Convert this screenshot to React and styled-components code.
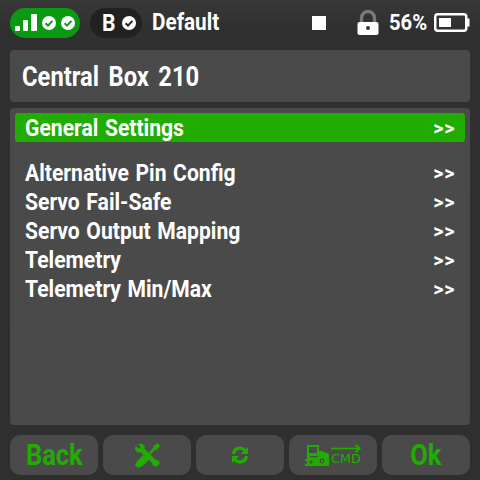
import styled, { createGlobalStyle } from 'styled-components';

const GREEN = '#20ac00';

const menuItems = ['Alternative Pin Config', 'Servo Fail-Safe', 'Servo Output Mapping', 'Telemetry', 'Telemetry Min/Max'];

const GlobalStyle = createGlobalStyle`
    html, body {
        margin: 0;
        padding: 0;
        background: #2f2f2f;
    }
    * {
        box-sizing: border-box;
    }
`;

const CheckDot = ({ size = 14, fill = '#fff', tick = '#0a9a12' }) => (
    <svg width={size} height={size} viewBox="0 0 14 14">
        <circle cx="7" cy="7" r="7" fill={fill} />
        <path d="M3.6 7.2 L6 9.6 L10.4 4.9" fill="none" stroke={tick} strokeWidth="2" />
    </svg>
);

const SignalBars = () => (
    <svg width="22" height="18" viewBox="0 0 22 18">
        <rect x="0" y="12" width="5" height="5" rx="1" fill="#fff" />
        <rect x="8" y="6" width="5" height="11" rx="1" fill="#fff" />
        <rect x="16" y="0" width="6" height="17" rx="1" fill="#fff" />
    </svg>
);

const LockIcon = () => (
    <svg width="22" height="25" viewBox="0 0 22 25">
        <path d="M4.5 12 V8 a6.5 6.5 0 0 1 13 0 V12" fill="none" stroke="#7a7a7a" strokeWidth="3.4" />
        <rect x="0.5" y="12" width="21" height="13" rx="2" fill="#fff" />
        <circle cx="11" cy="18" r="2" fill="#333" />
    </svg>
);

const BatteryIcon = () => (
    <svg width="36" height="20" viewBox="0 0 36 20">
        <rect x="1.25" y="1.25" width="31" height="16.5" rx="2.5" fill="none" stroke="#fff" strokeWidth="2.5" />
        <rect x="33" y="5.5" width="2.5" height="8" fill="#fff" />
        <rect x="5" y="5" width="12" height="9" fill="#fff" />
    </svg>
);

const ToolsIcon = () => (
    <svg width="25" height="25" viewBox="0 0 26 26">
        <path d="M3 1 L8 1 L10 3 L10 6 L22 18 L24 18 L26 21 L22 25 L18 23 L18 21 L6 10 L3 10 L0 7 L0.5 3 L4 6 L6 4 Z" fill={GREEN} />
        <path d="M24 0 L26 3 L23 7 L21 7 L16 12 L18 14 L8 24 L3 26 L0 23 L2 19 L12 9 L14 11 L19 5 L19 3 Z" fill={GREEN} />
    </svg>
);

const RefreshIcon = () => (
    <svg width="18" height="18" viewBox="0 0 18 18">
        <path d="M2.5 8 A6.5 6.5 0 0 1 14 4.5" fill="none" stroke={GREEN} strokeWidth="3.2" />
        <path d="M17 1 V8 H10 Z" fill={GREEN} />
        <path d="M15.5 10 A6.5 6.5 0 0 1 4 13.5" fill="none" stroke={GREEN} strokeWidth="3.2" />
        <path d="M1 17 V10 H8 Z" fill={GREEN} />
    </svg>
);

const ReceiverIcon = () => (
    <svg width="25" height="21" viewBox="0 0 25 21">
        <path d="M2 0 H14 V6 H17 L24 9 V21 H0 V19 H2 V16 H0 V14 H2 Z" fill={GREEN} />
        <rect x="4" y="2" width="8" height="6" fill="#4a4a4a" />
        <rect x="5" y="11" width="8" height="1.2" fill="#4a4a4a" />
        <circle cx="6" cy="17" r="1.6" fill="#4a4a4a" />
        <circle cx="17" cy="16" r="2.4" fill="#4a4a4a" />
        <circle cx="17" cy="16" r="1.2" fill={GREEN} />
    </svg>
);

const ArrowIcon = () => (
    <svg width="30" height="9" viewBox="0 0 30 9">
        <path d="M0 4.5 H28" stroke={GREEN} strokeWidth="1.6" />
        <path d="M24.5 0.8 L28.5 4.5 L24.5 8.2" fill="none" stroke={GREEN} strokeWidth="2" />
    </svg>
);

const App = () => {
    return (
        <Screen>
            <GlobalStyle />
            <StatusBar>
                <RadioPill>
                    <SignalBars />
                    <CheckDot />
                    <CheckDot />
                </RadioPill>
                <ModelPill>
                    <span>B</span>
                    <CheckDot fill="#fff" tick="#222" />
                </ModelPill>
                <ProfileName>Default</ProfileName>
                <StopSquare />
                <LockBox>
                    <LockIcon />
                </LockBox>
                <BatteryText>56%</BatteryText>
                <BatteryIcon />
            </StatusBar>
            <TitlePanel>
                <Wide>Central Box 210</Wide>
            </TitlePanel>
            <ListPanel>
                <MenuRow $active>
                    <Wide>General Settings</Wide>
                    <Chevrons>&gt;&gt;</Chevrons>
                </MenuRow>
                <RowGap />
                {menuItems.map((item) => (
                    <MenuRow key={item}>
                        <Wide>{item}</Wide>
                        <Chevrons>&gt;&gt;</Chevrons>
                    </MenuRow>
                ))}
            </ListPanel>
            <Footer>
                <FooterButton>
                    <FooterLabel>Back</FooterLabel>
                </FooterButton>
                <FooterButton>
                    <ToolsIcon />
                </FooterButton>
                <FooterButton>
                    <RefreshIcon />
                </FooterButton>
                <FooterButton>
                    <ReceiverIcon />
                    <CmdBox>
                        <ArrowIcon />
                        <CmdText>CMD</CmdText>
                    </CmdBox>
                </FooterButton>
                <FooterButton>
                    <FooterLabel>Ok</FooterLabel>
                </FooterButton>
            </Footer>
        </Screen>
    );
};

export default App;

const Screen = styled.div`
    width: 480px;
    height: 480px;
    overflow: hidden;
    display: flex;
    flex-direction: column;
    background: linear-gradient(#383838 0, #303030 28px, #2f2f2f 100%);
    font-family: Roboto, 'Liberation Sans', sans-serif;
    font-weight: 700;
    color: #fff;
`;

const StatusBar = styled.div`
    height: 50px;
    padding: 5px 10px 10px;
    display: flex;
    align-items: center;
    svg {
        flex-shrink: 0;
    }
`;

const RadioPill = styled.div`
    width: 70px;
    height: 30px;
    border-radius: 15px;
    background: #0a9a12;
    display: flex;
    align-items: center;
    padding-left: 5px;
    gap: 5px;
`;

const ModelPill = styled.div`
    width: 52px;
    height: 30px;
    margin-left: 10px;
    border-radius: 15px;
    background: #212121;
    display: flex;
    align-items: center;
    justify-content: space-between;
    padding: 0 6px 0 12px;
    font-size: 24px;
    span {
        display: inline-block;
        transform: scaleX(0.88);
        transform-origin: left center;
    }
`;

const ProfileName = styled.div`
    margin-left: 10px;
    font-size: 23px;
    width: 100px;
    transform: scaleX(0.9);
    transform-origin: left center;
`;

const StopSquare = styled.div`
    width: 14px;
    height: 14px;
    margin-left: 61px;
    background: #fff;
`;

const LockBox = styled.div`
    margin-left: 31px;
    display: flex;
`;

const BatteryText = styled.div`
    margin-left: 10px;
    font-size: 22px;
    width: 45px;
    transform: scaleX(0.92);
    transform-origin: left center;
`;

const TitlePanel = styled.div`
    height: 52px;
    margin: 0 10px;
    padding: 2px 0 0 12px;
    display: flex;
    align-items: center;
    background: #4a4a4a;
    border-radius: 4px;
    font-size: 27px;
    word-spacing: 4px;
`;

const ListPanel = styled.div`
    height: 317px;
    margin: 6px 10px 0;
    padding: 5px;
    background: #4a4a4a;
    border-radius: 4px;
    font-size: 24px;
    word-spacing: 1.5px;
`;

const MenuRow = styled.div`
    height: 29px;
    padding: 1px 10px 0;
    display: flex;
    align-items: center;
    justify-content: space-between;
    border-radius: 3px;
    background: ${({ $active }) => ($active ? GREEN : 'transparent')};
`;

const RowGap = styled.div`
    height: 16px;
`;

const Wide = styled.span`
    display: inline-block;
    transform: scaleX(0.88);
    transform-origin: left center;
    white-space: nowrap;
`;

const Chevrons = styled.span`
    font-size: 20px;
    letter-spacing: 0.5px;
`;

const Footer = styled.div`
    margin: 10px 10px 0;
    display: grid;
    grid-template-columns: repeat(5, 88px);
    column-gap: 5px;
`;

const FooterButton = styled.div`
    height: 40px;
    background: #4a4a4a;
    border-radius: 10px;
    display: flex;
    align-items: center;
    justify-content: center;
`;

const FooterLabel = styled.span`
    color: ${GREEN};
    font-size: 29px;
    transform: scaleX(0.88);
`;

const CmdBox = styled.div`
    display: flex;
    flex-direction: column;
    align-items: flex-start;
    margin-top: -2px;
    margin-left: 1px;
`;

const CmdText = styled.span`
    color: ${GREEN};
    font-size: 12.5px;
    font-weight: 400;
    line-height: 12px;
    letter-spacing: 0.3px;
    font-family: 'DejaVu Sans', sans-serif;
`;
